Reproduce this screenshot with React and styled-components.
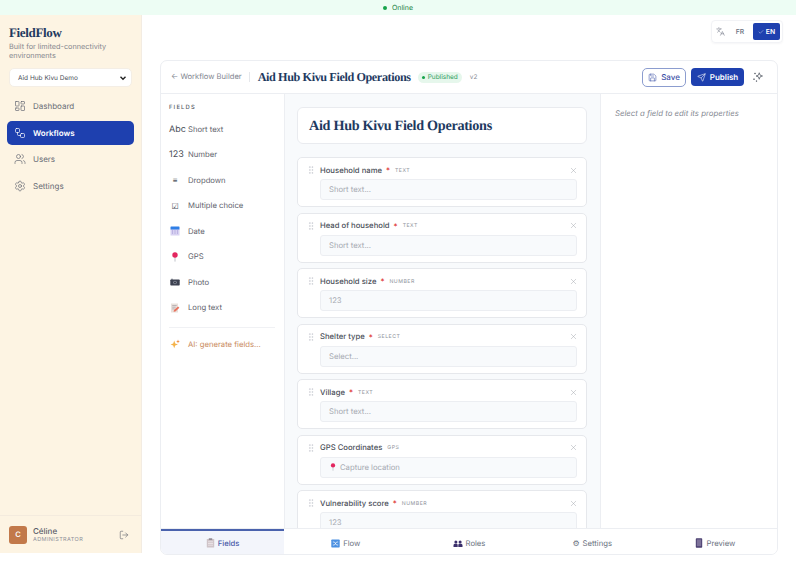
import React from 'react';
import styled, { createGlobalStyle } from 'styled-components';
import {
  LayoutDashboard,
  Workflow,
  Users,
  Settings,
  LogOut,
  Save,
  Send,
  Languages,
  Check,
  GripVertical,
  X,
} from 'lucide-react';

const SERIF = '"Liberation Serif", "DejaVu Serif", serif';

const GlobalStyle = createGlobalStyle`
  html, body {
    margin: 0;
    padding: 0;
    background: #fff;
    font-family: Inter, "Noto Sans", sans-serif;
    text-rendering: geometricPrecision;
    overflow: hidden;
  }
  * { box-sizing: border-box; }
`;

/* top banner */
const Banner = styled.div`
  height: 15px;
  background: #edfdf4;
  display: flex;
  align-items: center;
  justify-content: center;
  gap: 5px;
  font-size: 7px;
  color: #15803d;
`;

const Dot = styled.span`
  width: 4px;
  height: 4px;
  border-radius: 50%;
  background: #16a34a;
`;

const Shell = styled.div`
  display: flex;
  height: 558px;
  align-items: flex-start;
`;

/* sidebar */
const Sidebar = styled.aside`
  width: 142px;
  height: 538px;
  flex-shrink: 0;
  background: #fdf4e3;
  border-right: 1px solid #f3ece2;
  display: flex;
  flex-direction: column;
`;

const Brand = styled.div`
  padding: 10px 9px 0;
`;

const Logo = styled.div`
  font-family: ${SERIF};
  font-weight: 700;
  font-size: 13px;
  letter-spacing: -0.35px;
  line-height: 15px;
  color: #1e3a5f;
`;

const Tagline = styled.div`
  margin-top: 2px;
  font-size: 7.3px;
  line-height: 9px;
  color: #85878e;
`;

const OrgSelect = styled.div`
  margin: 8px 9px 0;
  height: 19px;
  border: 1px solid #f4eee5;
  border-radius: 5px;
  background: #fff;
  padding: 0 3px 0 8px;
  display: flex;
  align-items: center;
  justify-content: space-between;
  font-size: 6.5px;
  color: #4b4f59;
`;

const Nav = styled.nav`
  margin-top: 7px;
  padding: 0 7px;
  display: flex;
  flex-direction: column;
  gap: 2.5px;
`;

const NavItem = styled.div`
  height: 24px;
  border-radius: 5px;
  padding: 0 7px;
  display: flex;
  align-items: center;
  gap: 7px;
  font-size: 8px;
  font-weight: ${(p) => (p.$active ? 600 : 400)};
  color: ${(p) => (p.$active ? '#fff' : '#686c75')};
  background: ${(p) => (p.$active ? '#1e40af' : 'transparent')};
`;

const SideFooter = styled.div`
  margin-top: auto;
  height: 38px;
  border-top: 1px solid #f4ebde;
  padding: 0 12px 0 9px;
  display: flex;
  align-items: center;
  gap: 6px;
`;

const Avatar = styled.div`
  width: 18px;
  height: 18px;
  border-radius: 3px;
  background: #c2794a;
  color: #fff;
  font-size: 7.5px;
  font-weight: 600;
  display: flex;
  align-items: center;
  justify-content: center;
`;

const UserText = styled.div`
  flex: 1;
`;

const UserName = styled.div`
  font-size: 8px;
  line-height: 10px;
  font-weight: 500;
  color: #5b5f69;
`;

const UserRole = styled.div`
  font-size: 5.5px;
  line-height: 8px;
  letter-spacing: 0.4px;
  color: #8f929a;
`;

/* main */
const Main = styled.main`
  flex: 1;
  min-width: 0;
  padding: 5px 13px 0 18px;
`;

const LangRow = styled.div`
  display: flex;
  justify-content: flex-end;
  height: 40px;
`;

const LangSwitch = styled.div`
  height: 23px;
  padding: 2px;
  border: 1px solid #f2f3f6;
  border-radius: 4px;
  box-shadow: 0 1px 2px rgba(15, 23, 42, 0.04);
  display: flex;
  align-items: stretch;
  font-size: 6.8px;
  font-weight: 500;
  color: #6b7280;
`;

const LangIcon = styled.div`
  width: 13px;
  display: flex;
  align-items: center;
  justify-content: center;
`;

const LangFr = styled.div`
  width: 26px;
  display: flex;
  align-items: center;
  justify-content: center;
`;

const LangEn = styled.div`
  width: 27px;
  border-radius: 2px;
  background: #1e40af;
  color: #fff;
  font-weight: 600;
  display: flex;
  align-items: center;
  justify-content: center;
  gap: 2px;
`;

const Builder = styled.section`
  height: 495px;
  margin-right: 5px;
  border: 1px solid #eceef2;
  border-radius: 7px;
  display: flex;
  flex-direction: column;
  overflow: hidden;
`;

const BuilderHead = styled.header`
  height: 33px;
  flex-shrink: 0;
  border-bottom: 1px solid #eceef2;
  padding: 0 10px;
  display: flex;
  align-items: center;
`;

const BackLink = styled.div`
  font-size: 7.6px;
  color: #838791;
  padding-right: 7px;
  border-right: 1px solid #e5e7eb;
  line-height: 10px;
`;

const HeadTitle = styled.h1`
  margin: 0 7px 0 8px;
  font-family: ${SERIF};
  font-weight: 700;
  font-size: 12.2px;
  letter-spacing: -0.4px;
  color: #1e3a5f;
`;

const Badge = styled.div`
  height: 11px;
  padding: 0 4px;
  border-radius: 6px;
  background: #e6f7ec;
  color: #2f9e5f;
  font-size: 6.5px;
  display: flex;
  align-items: center;
  gap: 3px;
`;

const BadgeDot = styled(Dot)`
  width: 3px;
  height: 3px;
`;

const Version = styled.span`
  margin-left: 8px;
  font-size: 6.5px;
  color: #8b8f98;
`;

const HeadActions = styled.div`
  margin-left: auto;
  display: flex;
  align-items: center;
  gap: 5px;
`;

const SaveButton = styled.div`
  width: 44px;
  height: 19px;
  border: 1px solid #8c9dcf;
  border-radius: 5px;
  color: #3f54a8;
  font-size: 8px;
  font-weight: 500;
  display: flex;
  align-items: center;
  justify-content: center;
  gap: 4px;
`;

const PublishButton = styled.div`
  width: 53px;
  height: 18px;
  border-radius: 4px;
  background: #1e40af;
  color: #fff;
  font-size: 8px;
  font-weight: 600;
  display: flex;
  align-items: center;
  justify-content: center;
  gap: 4px;
`;

const WandBox = styled.div`
  width: 18px;
  display: flex;
  justify-content: center;
  color: #6b7079;
`;

const BuilderBody = styled.div`
  flex: 1;
  min-height: 0;
  display: flex;
`;

/* palette column */
const Palette = styled.div`
  width: 123px;
  flex-shrink: 0;
  padding: 10px 9px 0 8px;
`;

const PaletteTitle = styled.div`
  font-size: 5.8px;
  font-weight: 500;
  letter-spacing: 1.2px;
  line-height: 8px;
  color: #555a65;
  margin-bottom: 4.5px;
`;

const PaletteItem = styled.div`
  height: 25.5px;
  display: flex;
  align-items: center;
  font-size: 7.7px;
  color: ${(p) => (p.$ai ? '#c98a5e' : '#5f636d')};
`;

const PaletteIcon = styled.span`
  width: 12px;
  margin-right: 7px;
  flex-shrink: 0;
  display: flex;
  justify-content: ${(p) => (p.$text ? 'flex-start' : 'center')};
  white-space: nowrap;
  font-size: ${(p) => (p.$text ? 9 : 8)}px;
  color: #4b4f59;
`;

const PaletteRule = styled.div`
  height: 1px;
  background: #f0f1f4;
  margin: 6px 0 4px;
`;

/* canvas */
const Canvas = styled.div`
  flex: 1;
  min-width: 0;
  background: #f8fafc;
  border-left: 1px solid #eceef2;
  border-right: 1px solid #eceef2;
  padding: 13px 13px 0 12px;
  overflow: hidden;
`;

const TitleCard = styled.div`
  height: 37px;
  background: #fff;
  border: 1px solid #e9ebef;
  border-radius: 6px;
  padding: 1px 11px 0;
  display: flex;
  align-items: center;
  font-family: ${SERIF};
  font-weight: 700;
  font-size: 14.2px;
  letter-spacing: -0.3px;
  color: #1e3a5f;
  margin-bottom: 13px;
`;

const FieldList = styled.div`
  display: flex;
  flex-direction: column;
  gap: 5.5px;
`;

const FieldCard = styled.div`
  flex-shrink: 0;
  height: 50px;
  background: #fff;
  border: 1px solid #e6e8ec;
  border-radius: 5px;
  padding: 5px 9px 0 10px;
  display: grid;
  grid-template-columns: 12px 1fr;
  grid-template-rows: 14px 21px;
  row-gap: 2px;
`;

const Grip = styled.div`
  display: flex;
  align-items: center;
  color: #bfc3ca;
  margin-left: -2px;
`;

const FieldHead = styled.div`
  display: flex;
  align-items: center;
`;

const FieldLabel = styled.span`
  font-size: 7.7px;
  font-weight: 500;
  color: #4b4f59;
`;

const Required = styled.span`
  margin-left: 4px;
  font-size: 8px;
  color: #dc2626;
`;

const FieldType = styled.span`
  margin-left: 5px;
  padding-top: 1px;
  font-size: 5.2px;
  letter-spacing: 0.5px;
  color: #8b8f98;
`;

const RemoveIcon = styled.span`
  margin-left: auto;
  margin-right: -1px;
  display: flex;
  color: #a3a7af;
`;

const FieldInput = styled.div`
  grid-column: 2;
  border: 1px solid #eceef2;
  border-radius: 3px;
  background: #f8fafc;
  padding: 0 8px;
  display: flex;
  align-items: center;
  gap: 3px;
  font-size: 7.7px;
  color: #a5a9b1;
`;

/* properties column */
const Properties = styled.div`
  width: 176px;
  flex-shrink: 0;
  padding: 14px 14px 0;
  font-size: 7.8px;
  line-height: 10px;
  font-style: italic;
  color: #838791;
`;

/* bottom tabs */
const Tabs = styled.div`
  height: 26px;
  flex-shrink: 0;
  display: grid;
  grid-template-columns: repeat(5, 1fr);
  border-top: 1px solid #eceef2;
`;

const Tab = styled.div`
  padding-top: ${(p) => (p.$active ? 1 : 3)}px;
  display: flex;
  align-items: center;
  justify-content: center;
  gap: 3px;
  font-size: 7.7px;
  font-weight: ${(p) => (p.$active ? 500 : 400)};
  color: ${(p) => (p.$active ? '#4a5ba8' : '#6b7280')};
  background: ${(p) => (p.$active ? '#f3f5fb' : '#fff')};
  border-top: ${(p) => (p.$active ? '2px solid #4a62ad' : 'none')};
`;

const GearGlyph = styled.span`
  font-size: 8px;
  color: #6b7280;
`;

/* emoji-like drawings */
const CalendarGlyph = () => (
  <svg width="10" height="10" viewBox="0 0 10 10">
    <rect x="0.5" y="3" width="9" height="6.5" fill="#d8d2f2" />
    <rect x="0.5" y="0.5" width="9" height="3" rx="0.6" fill="#2f7fe6" />
    <path d="M2 5h1M4.5 5h1M7 5h1M2 7h1M4.5 7h1M7 7h1" stroke="#9c90cf" strokeWidth="0.9" />
  </svg>
);

const PinGlyph = ({ size = 10 }) => (
  <svg width={size} height={size} viewBox="0 0 10 10">
    <path d="M5 4v5.6" stroke="#b9bcc4" strokeWidth="0.9" />
    <circle cx="5" cy="3" r="2.7" fill="#e3265f" />
  </svg>
);

const CameraGlyph = () => (
  <svg width="10" height="10" viewBox="0 0 10 10">
    <rect x="0.3" y="2.6" width="9.4" height="5.8" rx="0.7" fill="#3c4150" />
    <rect x="1" y="1.8" width="2" height="1" fill="#6a6f7c" />
    <circle cx="5" cy="5.5" r="1.8" fill="#8a8f9c" />
    <circle cx="5" cy="5.5" r="0.9" fill="#2a2e3a" />
  </svg>
);

const MemoGlyph = () => (
  <svg width="10" height="10" viewBox="0 0 10 10">
    <rect x="1" y="0.5" width="7" height="9" fill="#e9e1dc" />
    <path d="M2.2 2.5h4.5M2.2 4.2h3.5M2.2 5.9h2.4" stroke="#a8a2a6" strokeWidth="0.7" />
    <path d="M3.6 8.8 4 7l4-3.6 1.4 1.4-4 3.6z" fill="#e8735f" />
  </svg>
);

const SparkGlyph = () => (
  <svg width="10" height="10" viewBox="0 0 10 10">
    <path d="M4.2 1.6 5.2 4.4 8 5.4 5.2 6.4 4.2 9.2 3.2 6.4 0.6 5.4 3.2 4.4z" fill="#f4b24a" />
    <path d="M8 0.6l.5 1.4 1.4.5-1.4.5-.5 1.4-.5-1.4-1.4-.5 1.4-.5z" fill="#f08a3c" />
  </svg>
);

const ClipboardGlyph = () => (
  <svg width="9" height="10" viewBox="0 0 9 10">
    <rect x="0.8" y="1" width="7.4" height="8.6" rx="0.6" fill="#cfc4c8" />
    <rect x="2.8" y="0.3" width="3.4" height="1.6" fill="#8d8790" />
    <path d="M2 3.8h5M2 5.5h5M2 7.2h5" stroke="#f3eef0" strokeWidth="0.7" />
  </svg>
);

const FlowGlyph = () => (
  <svg width="9" height="9" viewBox="0 0 9 9">
    <rect x="0.3" y="0.5" width="8.4" height="8" rx="0.7" fill="#4a90e2" />
    <path d="M1.8 3h1.6l2.2 3h1.6M1.8 6h1.6l2.2-3h1.6" stroke="#fff" strokeWidth="0.7" fill="none" />
  </svg>
);

const RolesGlyph = () => (
  <svg width="10" height="9" viewBox="0 0 10 9">
    <circle cx="2.9" cy="3" r="1.5" fill="#3b2f6b" />
    <circle cx="7.1" cy="3" r="1.5" fill="#3b2f6b" />
    <path d="M0.5 8V6.2C0.5 5 1.6 4.7 2.9 4.7S4.7 5 4.7 6.2V8zM5.3 8V6.2C5.3 5 5.8 4.7 7.1 4.7S9.5 5 9.5 6.2V8z" fill="#3b2f6b" />
  </svg>
);

const PhoneGlyph = () => (
  <svg width="8" height="10" viewBox="0 0 8 10">
    <rect x="0.8" y="0.2" width="6.4" height="9.6" rx="0.8" fill="#4a3f70" />
    <rect x="1.8" y="1.4" width="4.4" height="6.8" fill="#7d7299" />
  </svg>
);

const SparkleCluster = () => (
  <svg width="12" height="12" viewBox="0 0 24 24" fill="none" stroke="currentColor" strokeWidth="1.8">
    <path d="M14.5 3.5 16.2 8.3 21 10l-4.8 1.7-1.7 4.8-1.7-4.8L8 10l4.8-1.7z" />
    <path d="M6 3.5v3M4.5 5h3M4 15v3M2.5 16.5h3M9 19v2.5M7.7 20.2h2.6" />
  </svg>
);

const navItems = [
  { label: 'Dashboard', icon: LayoutDashboard },
  { label: 'Workflows', icon: Workflow, active: true },
  { label: 'Users', icon: Users },
  { label: 'Settings', icon: Settings },
];

const paletteItems = [
  { label: 'Short text', icon: 'Abc', text: true },
  { label: 'Number', icon: '123', text: true },
  { label: 'Dropdown', icon: '≡' },
  { label: 'Multiple choice', icon: '☑' },
  { label: 'Date', icon: <CalendarGlyph /> },
  { label: 'GPS', icon: <PinGlyph /> },
  { label: 'Photo', icon: <CameraGlyph /> },
  { label: 'Long text', icon: <MemoGlyph /> },
];

const fields = [
  { label: 'Household name', type: 'TEXT', hint: 'Short text...', required: true },
  { label: 'Head of household', type: 'TEXT', hint: 'Short text...', required: true },
  { label: 'Household size', type: 'NUMBER', hint: '123', required: true },
  { label: 'Shelter type', type: 'SELECT', hint: 'Select...', required: true },
  { label: 'Village', type: 'TEXT', hint: 'Short text...', required: true },
  { label: 'GPS Coordinates', type: 'GPS', hint: 'Capture location', pin: true },
  { label: 'Vulnerability score', type: 'NUMBER', hint: '123', required: true },
];

const tabs = [
  { label: 'Fields', icon: <ClipboardGlyph />, active: true },
  { label: 'Flow', icon: <FlowGlyph /> },
  { label: 'Roles', icon: <RolesGlyph /> },
  { label: 'Settings', icon: <GearGlyph>⚙</GearGlyph> },
  { label: 'Preview', icon: <PhoneGlyph /> },
];

function App() {
  return (
    <>
      <GlobalStyle />
      <Banner>
        <Dot />
        Online
      </Banner>
      <Shell>
        <Sidebar>
          <Brand>
            <Logo>FieldFlow</Logo>
            <Tagline>Built for limited-connectivity environments</Tagline>
          </Brand>
          <OrgSelect>
            Aid Hub Kivu Demo
            <svg width="10" height="10" viewBox="0 0 10 10" fill="none">
              <path d="M2.5 3.8 5 6.2l2.5-2.4" stroke="#222" strokeWidth="1.4" />
            </svg>
          </OrgSelect>
          <Nav>
            {navItems.map((item) => (
              <NavItem key={item.label} $active={item.active}>
                <item.icon size={12} strokeWidth={1.4} />
                {item.label}
              </NavItem>
            ))}
          </Nav>
          <SideFooter>
            <Avatar>C</Avatar>
            <UserText>
              <UserName>Céline</UserName>
              <UserRole>ADMINISTRATOR</UserRole>
            </UserText>
            <LogOut size={10} strokeWidth={1.4} color="#5b5f69" />
          </SideFooter>
        </Sidebar>
        <Main>
          <LangRow>
            <LangSwitch>
              <LangIcon>
                <Languages size={9} strokeWidth={1.4} />
              </LangIcon>
              <LangFr>FR</LangFr>
              <LangEn>
                <Check size={6} strokeWidth={1.5} />
                EN
              </LangEn>
            </LangSwitch>
          </LangRow>
          <Builder>
            <BuilderHead>
              <BackLink>← Workflow Builder</BackLink>
              <HeadTitle>Aid Hub Kivu Field Operations</HeadTitle>
              <Badge>
                <BadgeDot />
                Published
              </Badge>
              <Version>v2</Version>
              <HeadActions>
                <SaveButton>
                  <Save size={9} strokeWidth={1.5} />
                  Save
                </SaveButton>
                <PublishButton>
                  <Send size={9} strokeWidth={1.5} />
                  Publish
                </PublishButton>
                <WandBox>
                  <SparkleCluster />
                </WandBox>
              </HeadActions>
            </BuilderHead>
            <BuilderBody>
              <Palette>
                <PaletteTitle>FIELDS</PaletteTitle>
                {paletteItems.map((item) => (
                  <PaletteItem key={item.label}>
                    <PaletteIcon $text={item.text}>{item.icon}</PaletteIcon>
                    {item.label}
                  </PaletteItem>
                ))}
                <PaletteRule />
                <PaletteItem $ai>
                  <PaletteIcon>
                    <SparkGlyph />
                  </PaletteIcon>
                  AI: generate fields...
                </PaletteItem>
              </Palette>
              <Canvas>
                <TitleCard>Aid Hub Kivu Field Operations</TitleCard>
                <FieldList>
                  {fields.map((field) => (
                    <FieldCard key={field.label}>
                      <Grip>
                        <GripVertical size={10} strokeWidth={1.3} />
                      </Grip>
                      <FieldHead>
                        <FieldLabel>{field.label}</FieldLabel>
                        {field.required && <Required>*</Required>}
                        <FieldType>{field.type}</FieldType>
                        <RemoveIcon>
                          <X size={9} strokeWidth={1.3} />
                        </RemoveIcon>
                      </FieldHead>
                      <FieldInput>
                        {field.pin && <PinGlyph size={8} />}
                        {field.hint}
                      </FieldInput>
                    </FieldCard>
                  ))}
                </FieldList>
              </Canvas>
              <Properties>Select a field to edit its properties</Properties>
            </BuilderBody>
            <Tabs>
              {tabs.map((tab) => (
                <Tab key={tab.label} $active={tab.active}>
                  {tab.icon}
                  {tab.label}
                </Tab>
              ))}
            </Tabs>
          </Builder>
        </Main>
      </Shell>
    </>
  );
}

export default App;
